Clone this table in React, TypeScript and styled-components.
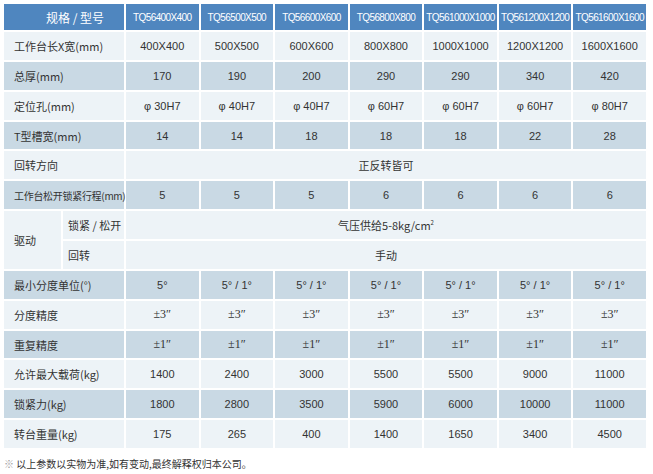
import * as React from 'react';
import styled, { createGlobalStyle } from 'styled-components';

const GlobalStyle = createGlobalStyle`
  body {
    margin: 0;
    background: #ffffff;
    font-family: "Liberation Sans", "Noto Sans CJK SC", sans-serif;
    color: #333333;
  }
`;

type Tone = 'light' | 'dark';

const models = [
  'TQ56400X400', 'TQ56500X500', 'TQ56600X600', 'TQ56800X800',
  'TQ561000X1000', 'TQ561200X1200', 'TQ561600X1600',
];

interface ISpecRow {
  label: string;
  values: string[];
  serif?: boolean;
}

const topRows: ISpecRow[] = [
  { label: '工作台长X宽(mm)', values: ['400X400', '500X500', '600X600', '800X800', '1000X1000', '1200X1200', '1600X1600'] },
  { label: '总厚(mm)', values: ['170', '190', '200', '290', '290', '340', '420'] },
  { label: '定位孔(mm)', values: ['φ 30H7', 'φ 40H7', 'φ 40H7', 'φ 60H7', 'φ 60H7', 'φ 60H7', 'φ 80H7'] },
  { label: 'T型槽宽(mm)', values: ['14', '14', '18', '18', '18', '22', '28'] },
];

const bottomRows: ISpecRow[] = [
  { label: '最小分度单位(°)', values: ['5°', '5° / 1°', '5° / 1°', '5° / 1°', '5° / 1°', '5° / 1°', '5° / 1°'] },
  { label: '分度精度', values: Array(7).fill('±3″'), serif: true },
  { label: '重复精度', values: Array(7).fill('±1″'), serif: true },
  { label: '允许最大载荷(kg)', values: ['1400', '2400', '3000', '5500', '5500', '9000', '11000'] },
  { label: '锁紧力(kg)', values: ['1800', '2800', '3500', '5900', '6000', '10000', '11000'] },
  { label: '转台重量(kg)', values: ['175', '265', '400', '1400', '1650', '3400', '4500'] },
];

// alternate row shading
const toneOf = (i: number, startDark: boolean): Tone =>
  (i % 2 === 0) === startDark ? 'dark' : 'light';

const App: React.FunctionComponent = () => {
  return (
    <Page>
      <GlobalStyle />
      <SpecTable>
        <colgroup>
          <col style={{ width: 57 }} />
          <col style={{ width: 61 }} />
          {models.map(m => <col key={m} />)}
        </colgroup>
        <tbody>
          <HeadRow>
            <HeadLabel colSpan={2}>规格 / 型号</HeadLabel>
            {models.map(m => <HeadCell key={m}>{m}</HeadCell>)}
          </HeadRow>
          {topRows.map((row, i) => (
            <BodyRow key={row.label} $tone={toneOf(i, false)}>
              <Label colSpan={2}>{row.label}</Label>
              {row.values.map((v, j) => <Value key={j}>{v}</Value>)}
            </BodyRow>
          ))}
          <BodyRow $tone="light">
            <Label colSpan={2}>回转方向</Label>
            <Merged colSpan={7}>正反转皆可</Merged>
          </BodyRow>
          <BodyRow $tone="dark">
            <Label colSpan={2} $small>工作台松开锁紧行程(mm)</Label>
            {['5', '5', '5', '6', '6', '6', '6'].map((v, j) => <Value key={j}>{v}</Value>)}
          </BodyRow>
          <BodyRow $tone="light">
            <Label rowSpan={2}>驱动</Label>
            <SubLabel>锁紧 / 松开</SubLabel>
            <Merged colSpan={7}>气压供给5-8kg/cm<sup>2</sup></Merged>
          </BodyRow>
          <BodyRow $tone="light">
            <SubLabel>回转</SubLabel>
            <Merged colSpan={7}>手动</Merged>
          </BodyRow>
          {bottomRows.map((row, i) => (
            <BodyRow key={row.label} $tone={toneOf(i, true)}>
              <Label colSpan={2}>{row.label}</Label>
              {row.values.map((v, j) => <Value key={j} $serif={row.serif}>{v}</Value>)}
            </BodyRow>
          ))}
        </tbody>
      </SpecTable>
      <Note>
        <Mark>※</Mark> 以上参数以实物为准,如有变动,最终解释权归本公司。
      </Note>
    </Page>
  );
};

export default App;

const Page = styled.div`
  padding: 2px;
  width: 653px;
  box-sizing: border-box;
`;

const SpecTable = styled.table`
  width: 646px;
  table-layout: fixed;
  border-collapse: separate;
  border-spacing: 2px;
`;

const HeadRow = styled.tr`
  height: 26px;
  background: #4f86bf;
  color: #ffffff;
`;

const HeadLabel = styled.th`
  padding: 0 0 0 22px;
  font-family: "Noto Sans CJK SC", sans-serif;
  font-size: 12px;
  font-weight: 400;
  text-align: center;
`;

const HeadCell = styled.th`
  padding: 0;
  font-family: "Liberation Sans", sans-serif;
  font-size: 10px;
  letter-spacing: -0.6px;
  font-weight: 400;
  text-align: center;
  white-space: nowrap;
  overflow: hidden;
`;

const BodyRow = styled.tr<{ $tone: Tone }>`
  height: 27.86px;
  background: ${p => (p.$tone === 'dark' ? '#c9d9e4' : '#edf3f7')};
`;

const Label = styled.td<{ $small?: boolean }>`
  padding: 0 0 0 10px;
  font-family: "Noto Sans CJK SC", sans-serif;
  font-size: ${p => (p.$small ? '10px' : '11px')};
  letter-spacing: ${p => (p.$small ? '-0.3px' : '0')};
  white-space: nowrap;
  text-align: left;
`;

const SubLabel = styled.td`
  padding: 0 0 0 5px;
  font-family: "Noto Sans CJK SC", sans-serif;
  font-size: 11px;
  white-space: nowrap;
`;

const Value = styled.td<{ $serif?: boolean }>`
  padding: 0;
  text-align: center;
  font-family: ${p => (p.$serif ? '"Liberation Serif", serif' : '"Liberation Sans", sans-serif')};
  font-size: ${p => (p.$serif ? '12px' : '11px')};
  white-space: nowrap;
`;

const Merged = styled.td`
  padding: 0;
  text-align: center;
  font-family: "Noto Sans CJK SC", sans-serif;
  font-size: 11px;

  sup {
    font-size: 6px;
    vertical-align: 5px;
  }
`;

const Note = styled.p`
  margin: 6px 0 0 2px;
  font-family: "Noto Sans CJK SC", sans-serif;
  font-size: 10px;
  color: #333333;
`;

const Mark = styled.span`
  color: #a0a0a0;
`;
